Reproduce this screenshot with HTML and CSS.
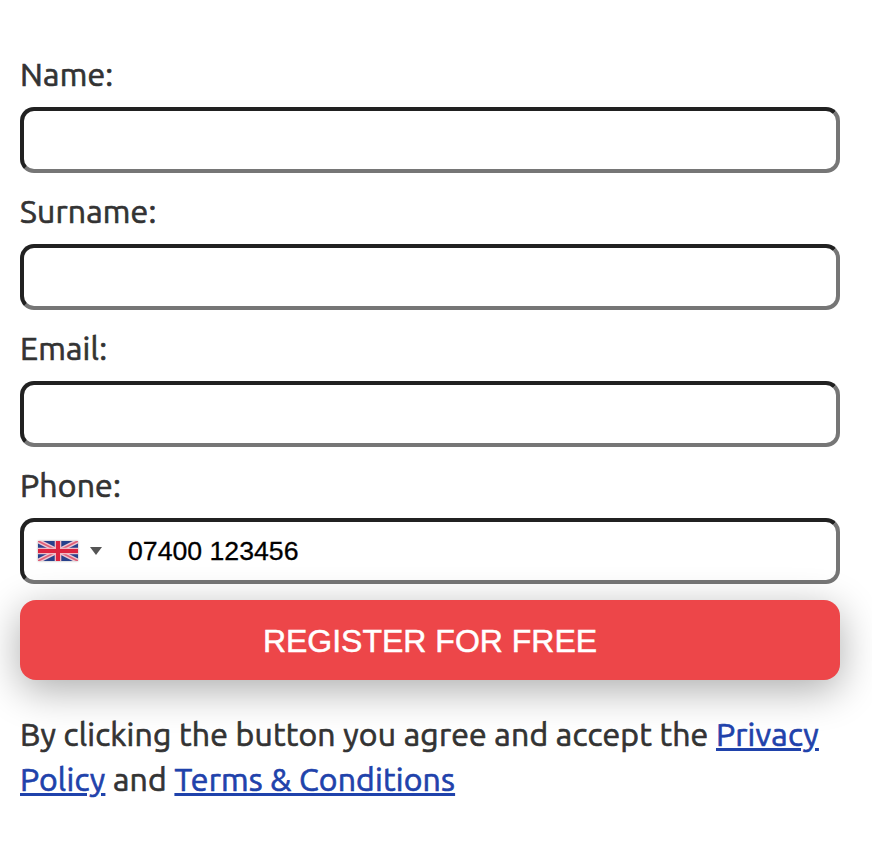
FILE: index.html
```
<!DOCTYPE html>
<html lang="en">
<head>
  <meta charset="UTF-8">
  <title>Register</title>
  <link rel="stylesheet" href="styles.css">
</head>
<body>

<form class="register-form">
  <div class="field">
    <label for="name">Name:</label>
    <input type="text" id="name">
  </div>
  <div class="field">
    <label for="surname">Surname:</label>
    <input type="text" id="surname">
  </div>
  <div class="field">
    <label for="email">Email:</label>
    <input type="text" id="email">
  </div>
  <div class="field">
    <label for="phone">Phone:</label>
    <div class="phone-box">
      <svg class="flag" viewBox="0 0 40 20" width="40" height="20">
        <rect width="40" height="20" fill="#28418c"/>
        <path d="M0 0L40 20M40 0L0 20" stroke="#efc9d4" stroke-width="4.6"/>
        <path d="M0 0L40 20M40 0L0 20" stroke="#df6078" stroke-width="1.8"/>
        <path d="M20 0V20M0 10H40" stroke="#f0b9c5" stroke-width="6.6"/>
        <path d="M20 0V20M0 10H40" stroke="#dc2440" stroke-width="4"/>
      </svg>
      <span class="arrow"></span>
      <input type="tel" id="phone" value="07400 123456">
    </div>
  </div>
  <button type="button" class="btn">REGISTER FOR FREE</button>
  <p class="terms">By clicking the button you agree and accept the <a href="#">Privacy<br>Policy</a> and <a href="#">Terms &amp; Conditions</a></p>
</form>

</body>
</html>
```
FILE: styles.css
```
* { box-sizing: border-box; }

body {
  margin: 0;
  background: #fff;
  color: #333;
  font-family: Ubuntu, "Noto Sans", sans-serif;
  font-size: 32px;
  letter-spacing: 0.18px;
  -webkit-text-stroke: 0.7px;
}

.register-form {
  width: 820px;
  margin-left: 20px;
  padding-top: 52px;
}

.field { margin-bottom: 16px; }

label {
  display: block;
  height: 45px;
  margin-bottom: 10px;
  line-height: 44px;
}

.field input,
.phone-box {
  display: block;
  width: 100%;
  height: 66px;
  background: #fff;
  border: 4px inset #767676;
  border-radius: 14px;
}

.phone-box {
  display: flex;
  align-items: center;
  padding-left: 14px;
}

.flag {
  flex: none;
  box-shadow: 0 0 2px #aaa;
}

.arrow {
  margin-left: 12px;
  border-top: 8px solid #555;
  border-left: 6px solid transparent;
  border-right: 6px solid transparent;
}

.phone-box input {
  width: 600px;
  height: 50px;
  margin-left: 26px;
  padding: 0;
  border: 0;
  background: none;
  color: #000;
  font: 26.67px "Liberation Sans", Arial, sans-serif;
  -webkit-text-stroke: 0.3px;
}

.btn {
  display: block;
  width: 100%;
  height: 80px;
  padding: 3px 0 0;
  border: 0;
  border-radius: 16px;
  background: #ed4649;
  color: #fff;
  font: 32px "Liberation Sans", Arial, sans-serif;
  -webkit-text-stroke: 0.5px;
  box-shadow: 0 10px 40px rgba(0, 0, 0, 0.33);
}

.terms {
  margin: 32px 0 0;
  line-height: 45px;
  white-space: nowrap;
}

a {
  color: #1f42ab;
  text-decoration-thickness: 3px;
}
```
